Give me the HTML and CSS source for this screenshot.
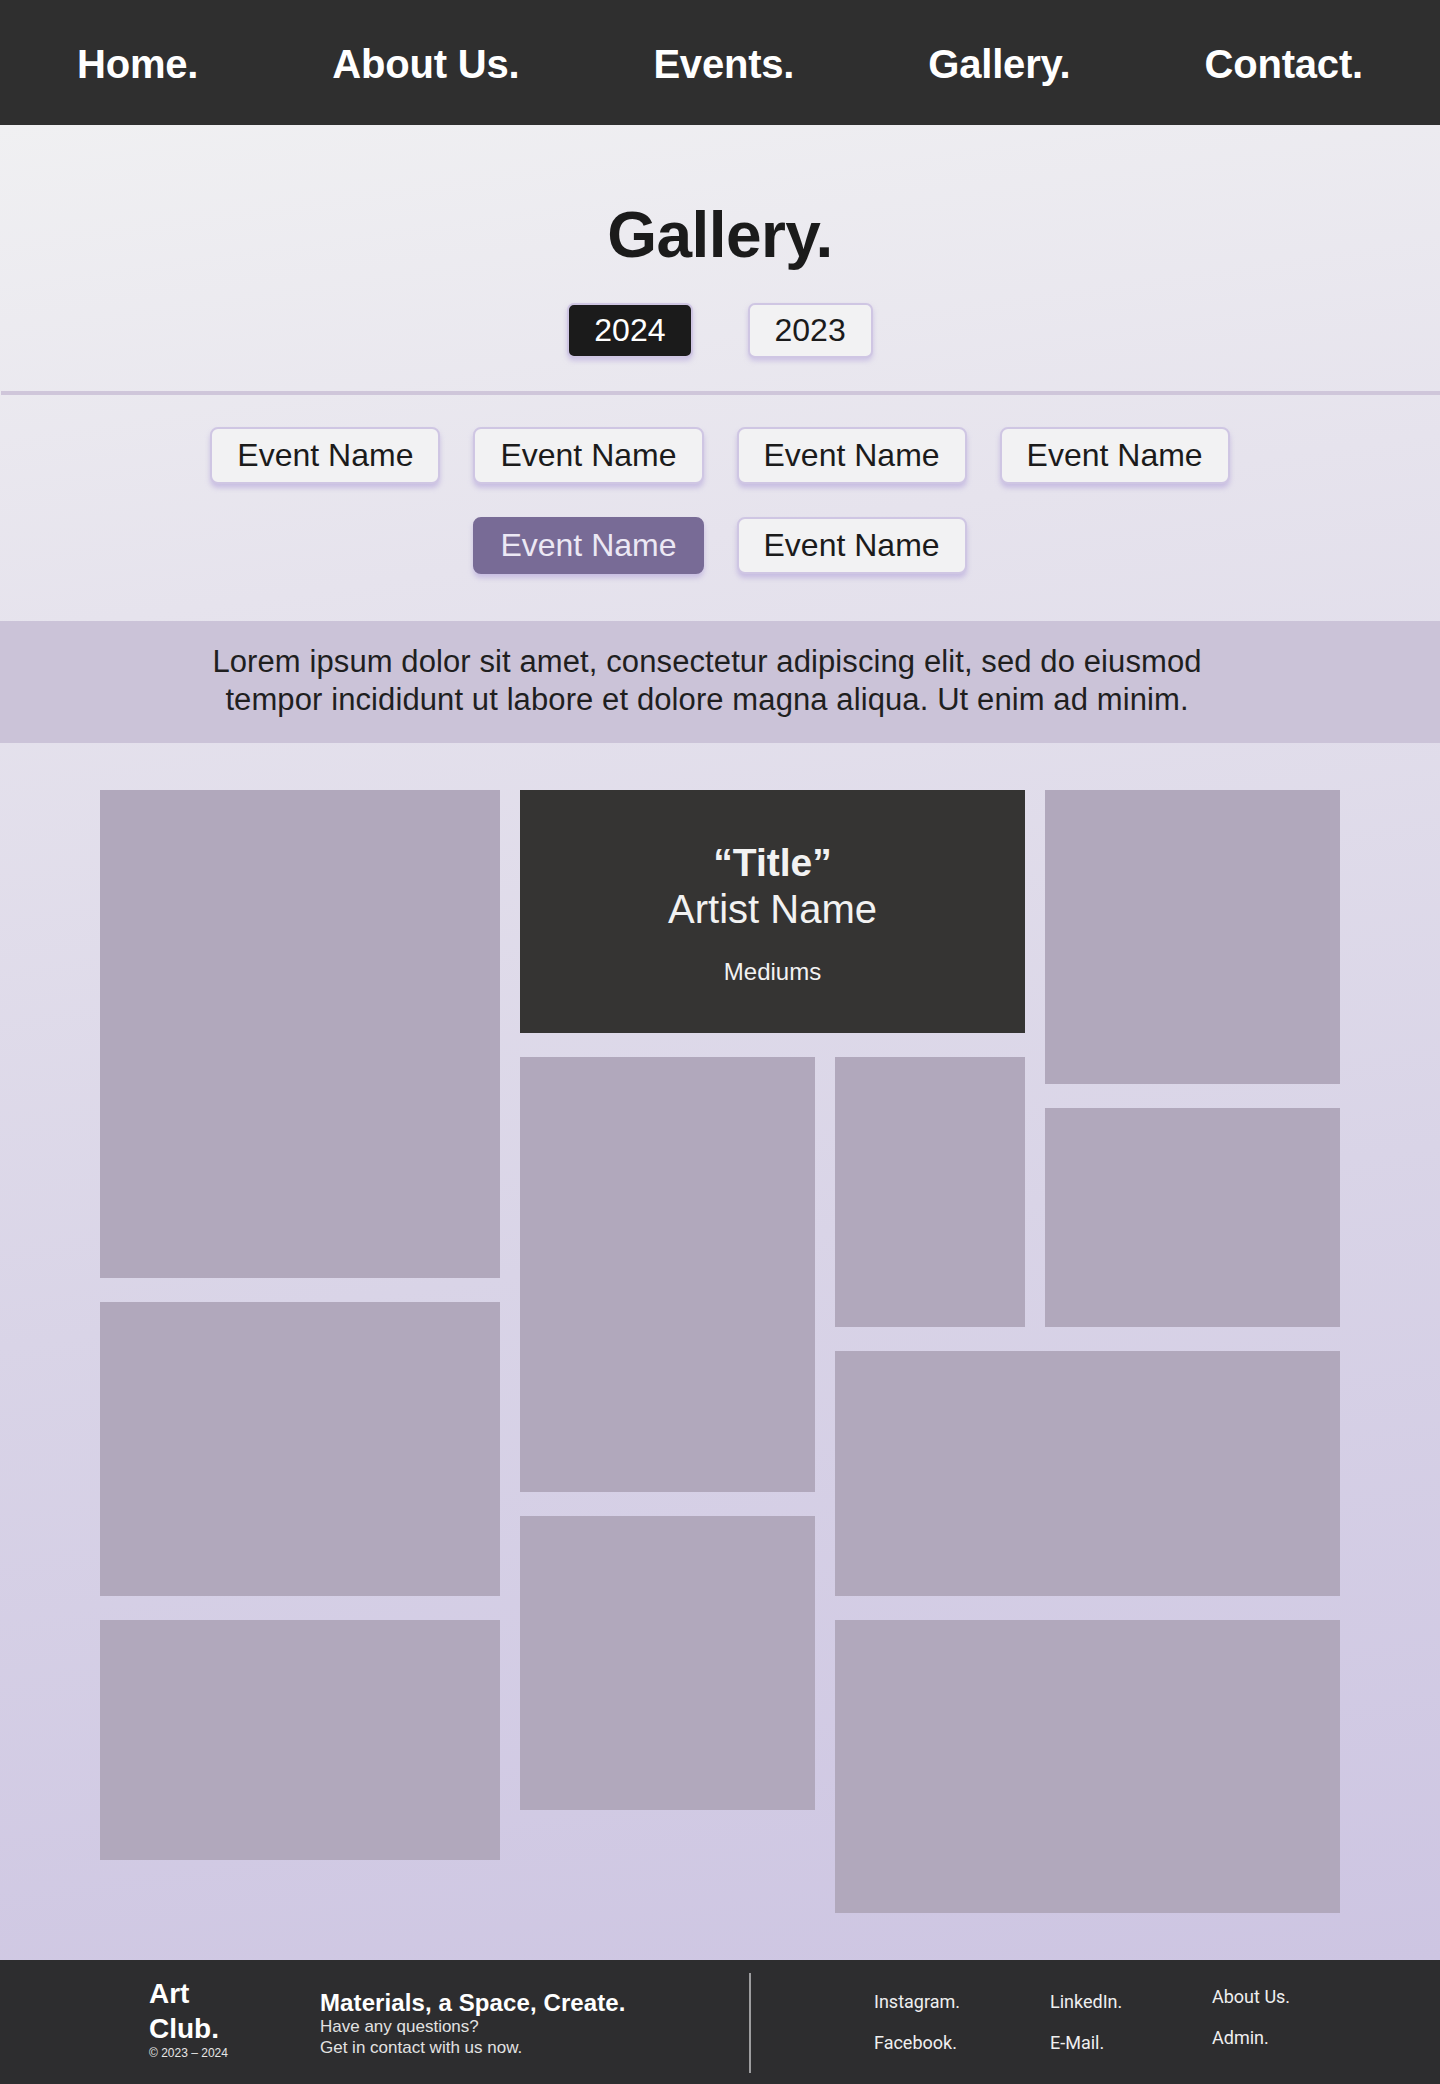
FILE: index.html
```html
<!DOCTYPE html>
<html lang="en">
<head>
<meta charset="utf-8">
<title>Gallery. – Art Club.</title>
<link rel="stylesheet" href="styles.css">
</head>
<body>
<nav class="nav">
  <a class="nav-link" href="#">Home.</a>
  <a class="nav-link" href="#">About Us.</a>
  <a class="nav-link" href="#">Events.</a>
  <a class="nav-link" href="#">Gallery.</a>
  <a class="nav-link" href="#">Contact.</a>
</nav>
<main class="main">
  <header class="page-head">
    <h1 class="page-title">Gallery.</h1>
    <div class="years">
      <button class="year-btn year-btn--active">2024</button>
      <button class="year-btn">2023</button>
    </div>
  </header>
  <div class="divider"></div>
  <section class="events">
    <button class="event-btn">Event Name</button>
    <button class="event-btn">Event Name</button>
    <button class="event-btn">Event Name</button>
    <button class="event-btn">Event Name</button>
    <button class="event-btn event-btn--active">Event Name</button>
    <button class="event-btn">Event Name</button>
  </section>
  <section class="band">
    <p class="band-text">Lorem ipsum dolor sit amet, consectetur adipiscing elit, sed do eiusmod<br>tempor incididunt ut labore et dolore magna aliqua. Ut enim ad minim.</p>
  </section>
  <section class="gallery">
    <div class="tile t-a"></div>
    <div class="tile t-b"></div>
    <div class="tile t-c"></div>
    <div class="card">
      <div class="card-title">“Title”</div>
      <div class="card-artist">Artist Name</div>
      <div class="card-medium">Mediums</div>
    </div>
    <div class="tile t-d"></div>
    <div class="tile t-e"></div>
    <div class="tile t-f"></div>
    <div class="tile t-g"></div>
    <div class="tile t-h"></div>
    <div class="tile t-i"></div>
    <div class="tile t-j"></div>
  </section>
</main>
<footer class="footer">
  <div class="footer-left">
    <div class="brand">
      <div class="brand-name">Art<br>Club.</div>
      <div class="brand-copy">© 2023 – 2024</div>
    </div>
    <div class="tagline">
      <div class="tagline-title">Materials, a Space, Create.</div>
      <div class="tagline-text">Have any questions?<br>Get in contact with us now.</div>
    </div>
  </div>
  <div class="footer-rule"></div>
  <div class="footer-links">
    <div class="link-col">
      <a class="foot-link" href="#">Instagram.</a>
      <a class="foot-link" href="#">Facebook.</a>
    </div>
    <div class="link-col">
      <a class="foot-link" href="#">LinkedIn.</a>
      <a class="foot-link" href="#">E-Mail.</a>
    </div>
    <div class="link-col link-col--up">
      <a class="foot-link" href="#">About Us.</a>
      <a class="foot-link" href="#">Admin.</a>
    </div>
  </div>
</footer>
</body>
</html>
```

FILE: styles.css
```css
* { box-sizing: border-box; }
html, body { margin: 0; padding: 0; }
body {
  font-family: "Liberation Sans", Arial, Helvetica, sans-serif;
  color: #1b1b1b;
  width: 1440px;
}

/* NAV */
.nav {
  height: 125px;
  background: #2f2f2f;
  display: flex;
  align-items: center;
  justify-content: space-between;
  padding: 2px 77px 0 77px;
}
.nav-link {
  color: #ffffff;
  text-decoration: none;
  font-weight: 700;
  font-size: 40px;
  line-height: 46px;
  letter-spacing: -0.2px;
}

/* MAIN */
.main {
  background: linear-gradient(172deg, #f0f0f2 0%, #e6e3ed 25%, #d9d4e7 60%, #cdc5e2 100%);
}
.page-head {
  padding-top: 78px;
  display: flex;
  flex-direction: column;
  align-items: center;
}
.page-title {
  margin: 0;
  font-size: 64px;
  line-height: 64px;
  font-weight: 700;
  letter-spacing: -0.6px;
  color: #1b1b1b;
}
.years {
  margin-top: 36px;
  display: flex;
  gap: 55px;
}
.year-btn {
  font-family: inherit;
  font-size: 32px;
  line-height: 37px;
  padding: 7px 25px;
  border: 2px solid #cfc6e3;
  border-radius: 7px;
  background: #f2f2f3;
  color: #1b1b1b;
  box-shadow: 0 3px 5px rgba(180, 165, 218, 0.55);
}
.year-btn--active {
  background: #1b1b1b;
  color: #ffffff;
}
.divider {
  margin-top: 33px;
  height: 4px;
  margin-left: 1px;
  background: #cfc6da;
}

/* EVENTS */
.events {
  max-width: 1080px;
  margin: 0 auto;
  padding: 32px 0 47px;
  display: flex;
  flex-wrap: wrap;
  justify-content: center;
  column-gap: 33px;
  row-gap: 33px;
}
.event-btn {
  font-family: inherit;
  font-size: 32px;
  line-height: 37px;
  padding: 8px 25px;
  border: 2px solid #cfc6e3;
  border-radius: 8px;
  background: #f2f2f3;
  color: #1b1b1b;
  box-shadow: 0 4px 5px rgba(180, 165, 218, 0.6);
}
.event-btn--active {
  background: #786b96;
  border-color: #786b96;
  color: #ece8f4;
}

/* BAND */
.band {
  background: #cbc3d8;
  padding: 22px 26px 24px 0;
}
.band-text {
  margin: 0;
  text-align: center;
  font-size: 31px;
  line-height: 38px;
  letter-spacing: 0.1px;
  color: #1f1f1f;
}

/* GALLERY */
.gallery {
  width: 1240px;
  margin: 0 auto;
  padding: 47px 0 47px 0;
  display: grid;
  grid-template-columns: 400px 295px 190px 295px;
  grid-template-rows: 243px 27px 170px 25px 141px 80px 190px 26px 29px;
  column-gap: 20px;
  row-gap: 24px;
}
.tile { background: #b1a8bc; }
.t-a { grid-column: 1; grid-row: 1 / 4; }
.t-b { grid-column: 1; grid-row: 4 / 7; }
.t-c { grid-column: 1; grid-row: 7 / 9; }
.t-d { grid-column: 2; grid-row: 2 / 6; }
.t-e { grid-column: 2; grid-row: 6 / 8; }
.t-f { grid-column: 3; grid-row: 2 / 5; }
.t-g { grid-column: 4; grid-row: 1 / 3; }
.t-h { grid-column: 4; grid-row: 3 / 5; }
.t-i { grid-column: 3 / 5; grid-row: 5 / 7; }
.t-j { grid-column: 3 / 5; grid-row: 7 / 10; }

.card {
  grid-column: 2 / 4;
  grid-row: 1;
  background: #353433;
  color: #f2f2f2;
  display: flex;
  flex-direction: column;
  align-items: center;
  justify-content: center;
  text-align: center;
  padding-top: 4px;
}
.card-title {
  font-size: 39px;
  line-height: 46px;
  font-weight: 700;
}
.card-artist {
  font-size: 40px;
  line-height: 46px;
}
.card-medium {
  margin-top: 25px;
  font-size: 24px;
  line-height: 30px;
}

/* FOOTER */
.footer {
  height: 125px;
  background: #2d2d2f;
  color: #ffffff;
  display: flex;
  align-items: center;
}
.footer-left {
  width: 749px;
  padding-left: 149px;
  display: flex;
  align-items: center;
}
.brand {
  width: 171px;
  margin-top: -9px;
}
.brand-name {
  font-size: 28px;
  line-height: 35px;
  font-weight: 700;
}
.brand-copy {
  font-size: 12px;
  line-height: 14px;
  color: #e6e6e6;
}
.tagline {
  display: flex;
  flex-direction: column;
  margin-top: 1px;
}
.tagline-title {
  font-size: 24px;
  line-height: 27px;
  font-weight: 700;
  letter-spacing: 0.1px;
}
.tagline-text {
  font-size: 17px;
  line-height: 21px;
  color: #e2e2e2;
}
.footer-rule {
  width: 2px;
  height: 100px;
  background: #9d9d9f;
}
.footer-links {
  display: flex;
  padding-left: 123px;
  margin-top: -2px;
  font-family: Roboto, "Liberation Sans", sans-serif;
}
.link-col {
  display: flex;
  flex-direction: column;
  gap: 20px;
  width: 176px;
}
.link-col + .link-col { width: 162px; }
.link-col--up { margin-top: -5px; }
.foot-link {
  color: #efefef;
  text-decoration: none;
  font-size: 18px;
  line-height: 21px;
}
```
